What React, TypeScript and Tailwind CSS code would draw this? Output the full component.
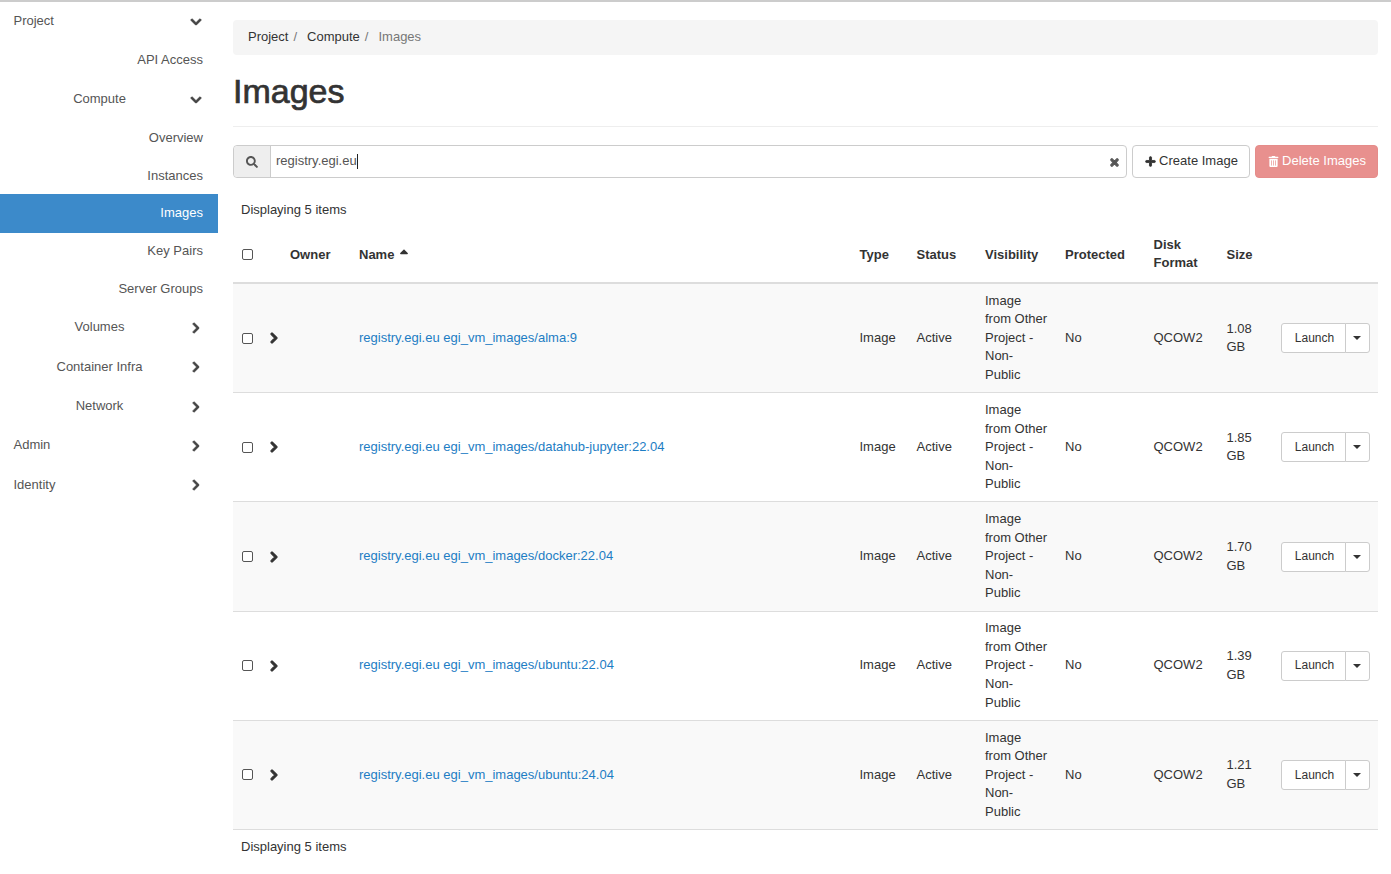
import { FaChevronDown, FaChevronRight, FaPlus, FaSearch, FaSortUp, FaTimes, FaTrashAlt } from 'react-icons/fa'

const sidebar = [
  { label: 'Project', h: 'h-[39px]', kind: 'top', open: true },
  { label: 'API Access', h: 'h-[39px]', kind: 'leaf' },
  { label: 'Compute', h: 'h-[39px]', kind: 'group', open: true },
  { label: 'Overview', h: 'h-[39px]', kind: 'leaf' },
  { label: 'Instances', h: 'h-[36px]', kind: 'leaf' },
  { label: 'Images', h: 'h-[39px]', kind: 'leaf', active: true },
  { label: 'Key Pairs', h: 'h-[37px]', kind: 'leaf' },
  { label: 'Server Groups', h: 'h-[38px]', kind: 'leaf' },
  { label: 'Volumes', h: 'h-[39px]', kind: 'group' },
  { label: 'Container Infra', h: 'h-[40px]', kind: 'group' },
  { label: 'Network', h: 'h-[39px]', kind: 'group' },
  { label: 'Admin', h: 'h-[39px]', kind: 'top' },
  { label: 'Identity', h: 'h-[40px]', kind: 'top' },
]

const images = [
  { name: 'alma:9', size: '1.08' },
  { name: 'datahub-jupyter:22.04', size: '1.85' },
  { name: 'docker:22.04', size: '1.70' },
  { name: 'ubuntu:22.04', size: '1.39' },
  { name: 'ubuntu:24.04', size: '1.21' },
]

function Checkbox() {
  return <span className="block w-[11px] h-[11px] border border-[#555] rounded-[2px] bg-white" />
}

function SideItem({ item }: { item: (typeof sidebar)[number] }) {
  const Chevron = item.open ? FaChevronDown : FaChevronRight
  if (item.kind === 'leaf') {
    return (
      <div className={`${item.h} flex items-center justify-end pr-[15px] ${item.active ? 'bg-[#3c8aca] text-white' : 'text-[#555]'}`}>
        {item.label}
      </div>
    )
  }
  return (
    <div className={`${item.h} flex items-center text-[#555] pr-[16px]`}>
      {item.kind === 'top' ? (
        <span className="pl-[13.5px]">{item.label}</span>
      ) : (
        <span className="w-[199px] -mr-[32px] text-center">{item.label}</span>
      )}
      <Chevron className="ml-auto text-[12px] text-[#444] [stroke-width:40]" />
    </div>
  )
}

function ImageRow({ name, size, striped }: { name: string; size: string; striped: boolean }) {
  return (
    <tr className={`border-t border-[#ddd] ${striped ? 'bg-[#f9f9f9]' : 'bg-white'}`}>
      <td className="pl-[9px] pr-0 py-2"><Checkbox /></td>
      <td className="pl-[7px] pr-0 py-2"><FaChevronRight className="text-[12px] text-[#333] -ml-[1px] [stroke-width:50]" /></td>
      <td className="p-2" />
      <td className="p-2 text-[#1d7dc4]">registry.egi.eu egi_vm_images/{name}</td>
      <td className="p-2">Image</td>
      <td className="p-2">Active</td>
      <td className="pl-2 pr-[9px] py-[7.7px]">Image from Other Project - Non-Public</td>
      <td className="p-2">No</td>
      <td className="p-2">QCOW2</td>
      <td className="p-2">{size} GB</td>
      <td className="p-2">
        <div className="flex h-[30px] text-[12px]">
          <span className="w-[65px] pl-[3px] flex items-center justify-center bg-white border border-[#ccc] rounded-l-[3px]">Launch</span>
          <span className="w-[25px] -ml-[1px] flex items-center justify-center bg-white border border-[#ccc] rounded-r-[3px]">
            <span className="w-0 h-0 border-x-[4px] border-x-transparent border-t-[4px] border-t-[#333]" />
          </span>
        </div>
      </td>
    </tr>
  )
}

export default function App() {
  return (
    <div className="h-[874px] overflow-hidden border-t-2 border-[#ccc] bg-white flex font-['Liberation_Sans',Arial,sans-serif] text-[13px] leading-[18.57px] text-[#333]">
      <aside className="w-[218px] shrink-0">
        {sidebar.map((item) => (
          <SideItem key={item.label} item={item} />
        ))}
      </aside>

      <main className="w-[1145px] ml-[15px] pt-[18px]">
        <div className="h-[35px] flex items-center px-[15px] bg-[#f5f5f5] rounded-[4px]">
          <span>Project</span>
          <span className="text-[#777] ml-[5px] mr-[10px]">/</span>
          <span>Compute</span>
          <span className="text-[#777] ml-[5px] mr-[10px]">/</span>
          <span className="text-[#777]">Images</span>
        </div>

        <div className="h-[72px] border-b border-[#eee] flex items-center">
          <h1 className="text-[34px] leading-[40px] pt-[1px] font-normal text-[#333] [-webkit-text-stroke:0.7px_#333]">Images</h1>
        </div>

        <div className="flex mt-[18px] h-[33px] gap-[5px]">
          <div className="flex-1 flex border border-[#ccc] rounded-[4px]">
            <span className="w-[37px] flex items-center justify-center bg-[#eee] border-r border-[#ccc] rounded-l-[4px] text-[#555]">
              <FaSearch className="text-[12px]" />
            </span>
            <span className="flex-1 flex items-center pl-[5px] text-[#555]">
              registry.egi.eu<span className="w-px h-[15px] bg-[#222]" />
            </span>
            <span className="w-[24px] flex items-center justify-center text-[#555]">
              <FaTimes className="text-[11px] mt-[1px] [stroke-width:50]" />
            </span>
          </div>
          <span className="w-[118px] pl-[1px] flex items-center justify-center gap-[3px] border border-[#ccc] rounded-[4px]">
            <FaPlus className="text-[11px] [stroke-width:40]" />Create Image
          </span>
          <span className="w-[123px] pl-[1px] flex items-center justify-center gap-[3px] bg-[#e8908e] border border-[#e58c8a] rounded-[4px] text-white">
            <FaTrashAlt className="text-[11px]" />Delete Images
          </span>
        </div>

        <p className="pl-2 mt-[23px] mb-[13px]">Displaying 5 items</p>

        <table className="w-full table-fixed border-collapse">
          <colgroup>
            <col className="w-[29px]" />
            <col className="w-[20px]" />
            <col className="w-[69px]" />
            <col className="w-[500.5px]" />
            <col className="w-[57px]" />
            <col className="w-[68.5px]" />
            <col className="w-[80px]" />
            <col className="w-[88.5px]" />
            <col className="w-[73px]" />
            <col className="w-[54px]" />
            <col className="w-[105.5px]" />
          </colgroup>
          <thead>
            <tr className="border-b-2 border-[#ddd] text-left font-bold h-[50.5px]">
              <th className="pl-[9px] pr-0 pb-[5px]"><Checkbox /></th>
              <th />
              <th className="px-2 pt-2 pb-[12px]">Owner</th>
              <th className="px-2 pt-2 pb-[12px]">
                <span className="inline-flex items-center gap-[3px]">Name <FaSortUp className="text-[14px] -mt-[1px]" /></span>
              </th>
              <th className="px-2 pt-2 pb-[12px]">Type</th>
              <th className="px-2 pt-2 pb-[12px]">Status</th>
              <th className="px-2 pt-2 pb-[12px]">Visibility</th>
              <th className="px-2 pt-2 pb-[12px]">Protected</th>
              <th className="px-2 pt-0 pb-[6px]">Disk Format</th>
              <th className="px-2 pt-2 pb-[12px]">Size</th>
              <th />
            </tr>
          </thead>
          <tbody>
            {images.map((img, i) => (
              <ImageRow key={img.name} name={img.name} size={img.size} striped={i % 2 === 0} />
            ))}
          </tbody>
        </table>

        <p className="pl-2 border-t border-[#ddd] pt-[8px]">Displaying 5 items</p>
      </main>
    </div>
  )
}
